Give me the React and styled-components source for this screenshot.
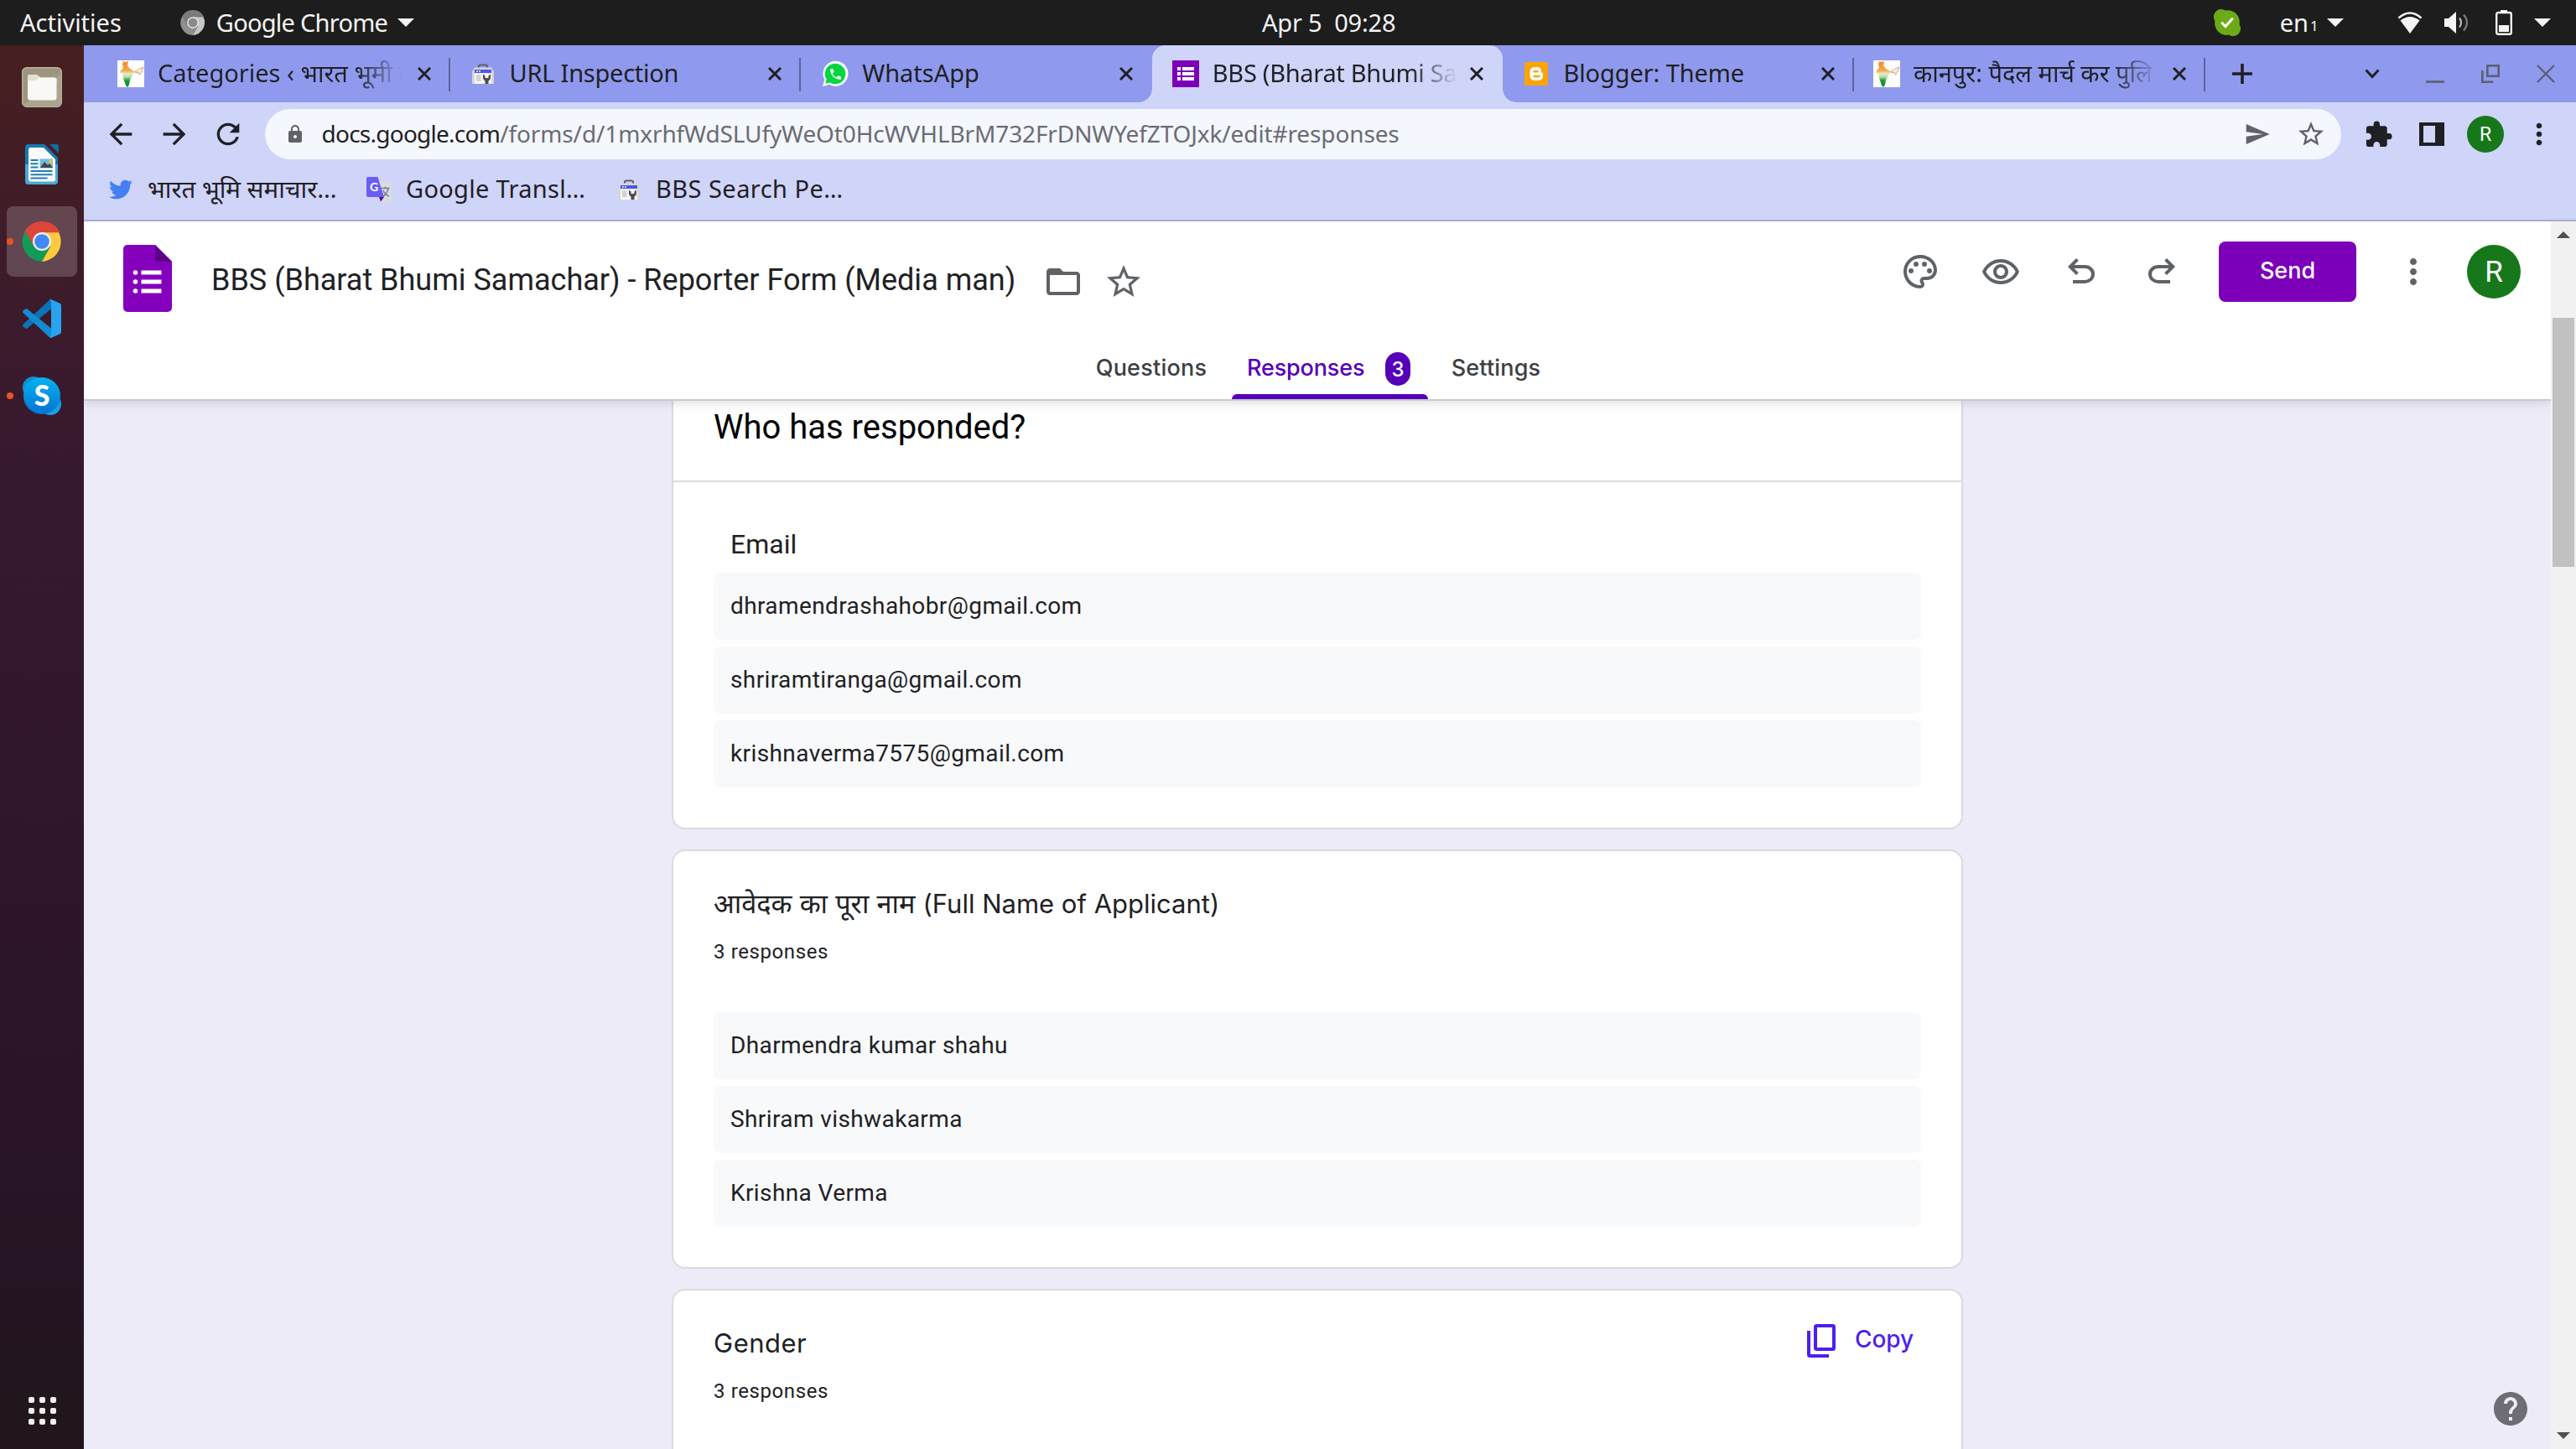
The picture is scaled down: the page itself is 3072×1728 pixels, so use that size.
import React from 'react';
import styled, { createGlobalStyle } from 'styled-components';
import {
  MdArrowBack, MdArrowForward, MdRefresh, MdLock, MdSend, MdStarBorder, MdExtension,
  MdMoreVert, MdFolderOpen, MdOutlinePalette, MdOutlineRemoveRedEye, MdHelp, MdPhone,
} from 'react-icons/md';
import { FaTwitter } from 'react-icons/fa';

const GlobalStyle = createGlobalStyle`
  *, *::before, *::after { box-sizing: border-box; }
  html, body { margin: 0; padding: 0; overflow: hidden; }
  svg { display: block; flex: none; }
`;

const uiFont = `'Noto Sans', 'Open Sans', sans-serif`;
const headingFont = `Inter, 'Noto Sans', sans-serif`;
const bodyFont = `Roboto, 'Noto Sans', sans-serif`;

/* ---------- desktop shell ---------- */

const Desktop = styled.div`
  width: 3072px;
  height: 1728px;
  display: grid;
  grid-template: 54px 1fr / 100px 1fr;
  overflow: hidden;
  font-family: ${uiFont};
  white-space: nowrap;
`;

const TopBar = styled.header`
  grid-column: 1 / -1;
  background: #1d1d1d;
  color: #f4f4f4;
  display: flex;
  align-items: center;
  padding: 0 30px 0 24px;
  font-size: 29px;
  line-height: 53px;
`;

const TopBarStart = styled.div`
  width: 1481px;
  display: flex;
  align-items: center;
`;

const TopBarEnd = styled.div`
  margin-left: auto;
  display: flex;
  align-items: center;
`;

const BarText = styled.span`
  height: 54px;
  white-space: pre;
  letter-spacing: ${(p) => p.$track || 0}px;
  margin-right: ${(p) => p.$after || 0}px;
`;

const BarSlot = styled.span`
  display: flex;
  margin-right: ${(p) => p.$after || 0}px;
`;

const KeyboardIndex = styled.span`
  font-size: 17px;
  line-height: 62px;
  height: 54px;
  width: 8px;
  margin-right: 12px;
`;

const Triangle = styled.span`
  width: 0;
  height: 0;
  border-style: solid;
  border-width: 10px 10px 0 10px;
  border-color: #f4f4f4 transparent transparent transparent;
`;

const Dock = styled.nav`
  background: linear-gradient(180deg, #471f20 0%, #3c1b2b 18%, #37192e 30%, #2c1527 68%, #251423 88%, #20161c 100%);
  display: flex;
  flex-direction: column;
  align-items: center;
  gap: 8px;
  padding: 8px 0 22px;
`;

const DockItem = styled.div`
  width: 84px;
  height: 84px;
  flex: none;
  border-radius: 8px;
  display: grid;
  place-items: center;
  position: relative;
  background: ${(p) => (p.$active ? 'rgba(255,255,255,0.19)' : 'transparent')};
`;

const RunningDot = styled.i`
  position: absolute;
  left: 0;
  top: 38px;
  width: 8px;
  height: 8px;
  border-radius: 50%;
  background: #e95420;
`;

const AppsButton = styled.div`
  margin-top: auto;
  width: 48px;
  height: 48px;
  display: grid;
  grid-template-columns: repeat(3, 7px);
  grid-auto-rows: 7px;
  gap: 6px;
  place-content: center;
`;

const AppsDot = styled.i`
  border-radius: 2px;
  background: #f1efec;
`;

/* ---------- browser chrome ---------- */

const Browser = styled.section`
  display: flex;
  flex-direction: column;
  min-width: 0;
  min-height: 0;
  background: #cfd4f9;
`;

const TabStrip = styled.div`
  height: 68px;
  flex: none;
  background: #8f9aee;
  display: flex;
  align-items: center;
  padding: 0 3px 0 18px;
`;

const BrowserTab = styled.div`
  position: relative;
  width: 418.6px;
  height: 68px;
  flex: none;
  display: flex;
  align-items: center;
  padding: 0 23px 0 ${(p) => p.$inset || 22}px;
  background: ${(p) => (p.$active ? '#cfd4f9' : 'transparent')};
  border-radius: 16px 16px 0 0;
  z-index: ${(p) => (p.$active ? 1 : 0)};

  &::before, &::after {
    content: '';
    display: ${(p) => (p.$active ? 'block' : 'none')};
    position: absolute;
    bottom: 0;
    width: 16px;
    height: 16px;
  }
  &::before {
    left: -16px;
    background: radial-gradient(circle at 0 0, transparent 15.5px, #cfd4f9 16px);
  }
  &::after {
    right: -16px;
    background: radial-gradient(circle at 100% 0, transparent 15.5px, #cfd4f9 16px);
  }
`;

const TabDivider = styled.i`
  position: absolute;
  right: 0;
  top: 15px;
  width: 2px;
  height: 40px;
  background: #5d6398;
`;

const Favicon = styled.span`
  width: 32px;
  height: 32px;
  flex: none;
  display: grid;
  place-items: center;
  margin-right: 16px;
`;

const TabTitle = styled.span`
  width: 292px;
  flex: none;
  overflow: hidden;
  font-size: 29px;
  line-height: 64px;
  height: 66px;
  color: #1f2024;
  letter-spacing: ${(p) => p.$track || 0}px;
  mask-image: ${(p) => (p.$fade ? 'linear-gradient(90deg, #000 236px, transparent 292px)' : 'none')};
`;

const TabClose = styled.span`
  margin-left: auto;
  display: flex;
`;

const StripButton = styled.span`
  width: ${(p) => p.$w || 66}px;
  height: 68px;
  margin-left: ${(p) => p.$push || 0};
  display: grid;
  place-items: center;
`;

const Toolbar = styled.div`
  height: 76px;
  flex: none;
  display: flex;
  align-items: center;
  padding: 0 12px;
  color: #1f2024;
`;

const ToolButton = styled.span`
  width: 64px;
  height: 60px;
  flex: none;
  display: grid;
  place-items: center;
`;

const AddressBar = styled.div`
  flex: 1;
  height: 60px;
  margin: 0 12px;
  border-radius: 30px;
  background: #f4f7fe;
  color: #5f6368;
  display: flex;
  align-items: center;
  padding: 0 4px 0 20px;
`;

const LockSlot = styled.span`
  width: 47.5px;
  padding-left: 4px;
`;

const Url = styled.span`
  flex: 1;
  font-size: 28px;
  line-height: 59px;
  height: 60px;
  color: #6a6c72;
  letter-spacing: -0.12px;
`;

const UrlHost = styled.span`
  color: #1f2024;
  letter-spacing: -0.75px;
`;

const Avatar = styled.span`
  width: ${(p) => p.$size}px;
  height: ${(p) => p.$size}px;
  border-radius: 50%;
  background: #17771b;
  color: #fff;
  display: grid;
  place-items: center;
  font-family: ${bodyFont};
  font-size: ${(p) => p.$font}px;
  line-height: 1;
`;

const BookmarkBar = styled.div`
  height: 66px;
  flex: none;
  display: flex;
  align-items: flex-start;
  gap: 35px;
  padding: 0 28px;
  border-bottom: 2px solid #a9accd;
`;

const Bookmark = styled.div`
  display: flex;
  align-items: center;
  height: 56px;
  color: #1f2024;
`;

const BookmarkLabel = styled.span`
  width: ${(p) => p.$w}px;
  font-size: ${(p) => p.$size || 29}px;
  line-height: 54px;
  height: 56px;
  letter-spacing: ${(p) => p.$track || 0}px;
`;

/* ---------- Forms page ---------- */

const Viewport = styled.div`
  flex: 1;
  min-height: 0;
  display: flex;
`;

const Page = styled.main`
  position: relative;
  flex: 1;
  min-width: 0;
  display: flex;
  flex-direction: column;
  background: #edebf8;
  overflow: hidden;
  font-family: ${bodyFont};
`;

const FormHeader = styled.header`
  position: relative;
  z-index: 1;
  height: 214px;
  flex: none;
  background: #fff;
  border-bottom: 2px solid #cacacf;
  box-shadow: 0 2px 12px rgba(0, 0, 0, 0.14);
`;

const TitleRow = styled.div`
  height: 136px;
  display: flex;
  align-items: center;
  padding: 0 36px 0 47px;
  color: #5f6368;
`;

const FormTitle = styled.h1`
  width: 958px;
  margin: 4px 34px 0 47px;
  font-size: 36px;
  font-weight: 400;
  line-height: 44px;
  color: #202124;
`;

const StarSlot = styled.span`
  margin: 8px 0 0 24px;
`;

const FolderSlot = styled.span`
  margin-top: 8px;
`;

const HeaderActions = styled.div`
  margin-left: auto;
  padding-bottom: 16px;
  display: flex;
  align-items: center;
`;

const HeaderIcon = styled.span`
  width: 96px;
  display: grid;
  place-items: center;
`;

const SendButton = styled.button`
  width: 164px;
  height: 72px;
  margin: 0 44px 0 20px;
  padding: 0 0 3px;
  border: 0;
  border-radius: 8px;
  background: #7b00b8;
  color: #fff;
  font: 500 27px ${headingFont};
`;

const MoreSlot = styled.span`
  margin-right: 40px;
`;

const FormTabs = styled.nav`
  height: 76px;
  display: flex;
  justify-content: center;
  gap: 12px;
`;

const FormTab = styled.a`
  position: relative;
  width: ${(p) => p.$w}px;
  display: flex;
  align-items: center;
  justify-content: ${(p) => (p.$active ? 'space-between' : 'center')};
  padding: ${(p) => (p.$active ? '0 21px 0 18px' : 0)};
  font: 500 27px ${headingFont};
  letter-spacing: ${(p) => p.$track || 0}px;
  color: ${(p) => (p.$active ? '#5600b8' : '#3c4043')};

  &::after {
    content: '';
    display: ${(p) => (p.$active ? 'block' : 'none')};
    position: absolute;
    left: 0;
    right: 0;
    bottom: 0;
    height: 6px;
    border-radius: 6px 6px 0 0;
    background: #5600b8;
  }
`;

const CountBadge = styled.span`
  width: 30px;
  height: 40px;
  margin-top: 4px;
  border-radius: 15px;
  background: #5600b8;
  color: #fff;
  display: grid;
  place-items: center;
  font-size: 24px;
  letter-spacing: 0;
`;

const CardList = styled.div`
  width: 1540px;
  margin: 0 auto;
  display: flex;
  flex-direction: column;
  gap: 24px;
`;

const Card = styled.section`
  flex: none;
  background: #fff;
  border: 2px solid #dadae0;
  border-top-width: ${(p) => (p.$cut ? 0 : 2)}px;
  border-radius: ${(p) => (p.$cut ? '0 0 16px 16px' : '16px')};
  padding-bottom: 48px;
`;

const CardBanner = styled.h2`
  margin: 0;
  height: 97px;
  padding-left: 48px;
  border-bottom: 2px solid #dadae0;
  font-size: 40px;
  font-weight: 400;
  line-height: 64px;
  color: #000;
`;

const CardBody = styled.div`
  padding: ${(p) => p.$top}px 48px 0;
`;

const ColumnLabel = styled.div`
  padding-left: 20px;
  margin-bottom: 14px;
  font-size: 32px;
  line-height: 40px;
  color: #202124;
`;

const QuestionRow = styled.div`
  display: flex;
  justify-content: space-between;
  height: 40px;
`;

const Question = styled.h3`
  margin: 0;
  font: 400 31px / 40px ${headingFont};
  letter-spacing: ${(p) => p.$track || 0}px;
  color: #202124;
`;

const QuestionHindi = styled.span`
  font-size: 32.5px;
  letter-spacing: 0;
`;

const ResponseCount = styled.div`
  margin-top: 21px;
  margin-bottom: 56px;
  font-size: 24px;
  line-height: 32px;
  letter-spacing: 0.6px;
  color: #202124;
`;

const Answers = styled.div`
  display: flex;
  flex-direction: column;
  gap: 8px;
`;

const Answer = styled.div`
  height: 80px;
  padding: 0 20px;
  border-radius: 8px;
  background: #f8f9fa;
  font-size: 28px;
  line-height: 79px;
  letter-spacing: 0.4px;
  color: #202124;
`;

const CopyButton = styled.div`
  display: flex;
  align-items: center;
  gap: 23px;
  height: 40px;
  padding-right: 9px;
  margin-top: -3px;
  color: #4f1fec;
  font: 500 28px / 37px ${headingFont};
  letter-spacing: -0.1px;
`;

const CopyLabel = styled.span`
  height: 40px;
`;

const HelpButton = styled.span`
  position: absolute;
  right: 24px;
  bottom: 24px;
  color: #6e6d73;
`;

const ScrollTrack = styled.div`
  width: 30px;
  flex: none;
  background: #f1f1f1;
  display: flex;
  flex-direction: column;
  align-items: center;
  padding: 12px 0;
`;

const ScrollArrow = styled.i`
  width: 0;
  height: 0;
  border-style: solid;
  border-color: transparent;
  border-width: ${(p) => (p.$down ? '8px 8px 0' : '0 8px 8px')};
  ${(p) => (p.$down ? 'margin-top: auto; border-top-color: #505050;' : 'border-bottom-color: #505050;')}
`;

const ScrollThumb = styled.div`
  width: 26px;
  height: 297px;
  margin-top: 95px;
  background: #c1c1c1;
`;

/* ---------- drawings ---------- */

const ChromeLogo = ({ size, red, yellow, green, ring, core }) => (
  <svg width={size} height={size} viewBox="0 0 48 48">
    <path d="M3.2 12A24 24 0 0 1 44.8 12V13.5H24L24 24L14 30Z" fill={red} />
    <path d="M44 13.2A24 24 0 0 1 23.5 48L34 30L24 24V13.2Z" fill={yellow} />
    <path d="M24 48A24 24 0 0 1 4 11.5L14 29.5L24 24L34 30Z" fill={green} />
    <circle cx="24" cy="24" r="11" fill={ring} />
    <circle cx="24" cy="24" r="8.8" fill={core} />
  </svg>
);

const FilesIcon = () => (
  <svg width="48" height="48" viewBox="0 0 48 48">
    <rect x="0.7" y="0.7" width="46.6" height="46.6" rx="5" fill="#9d957f" stroke="#b9b29f" strokeWidth="1.4" />
    <path d="M1.5 46L46 8v34a4 4 0 0 1-4 4z" fill="#aba48f" />
    <path d="M7 16v-5a2 2 0 0 1 2-2h9l4.5 3.5H39a2.5 2.5 0 0 1 2.5 2.5v5z" fill="#e4dfd3" />
    <rect x="7" y="12.5" width="34.5" height="27" rx="3" fill="#f9f8f6" />
    <path d="M7 18v-7a2 2 0 0 1 2-2h8l3.5 3.5L17 16H9a2 2 0 0 0-2 2z" fill="#e4dfd3" />
  </svg>
);

const WriterIcon = () => (
  <svg width="40" height="48" viewBox="0 0 40 48">
    <path d="M4 0h19l16 16v28a4 4 0 0 1-4 4H4a4 4 0 0 1-4-4V4a4 4 0 0 1 4-4z" fill="#1779b0" />
    <path d="M0 24h39v20a4 4 0 0 1-4 4H4a4 4 0 0 1-4-4z" fill="#49a9d8" />
    <path d="M6 4h16l14 14v24a2.5 2.5 0 0 1-2.5 2.5H6.5A2.5 2.5 0 0 1 4 42V6.5A2.5 2.5 0 0 1 6 4z" fill="#fbfbfb" />
    <path d="M29 0h9a2 2 0 0 1 2 2v9z" fill="#0f6ba3" />
    <path d="M6.5 19h9M6.5 23.3h9M6.5 27.6h9M6.5 32h26M6.5 36.3h26M6.5 40.6h20" stroke="#1f80b6" strokeWidth="2" />
    <rect x="17.5" y="17.5" width="15.5" height="11" fill="#6dbbe6" />
    <path d="M18 28l5-7 4 4 2-2 4 5z" fill="#474747" />
    <circle cx="30.5" cy="20.5" r="2.2" fill="#f0c63a" />
  </svg>
);

const CodeIcon = () => (
  <svg width="46" height="46" viewBox="0 0 46 46">
    <path d="M0.5 32.5Q-0.5 31 0.5 30L32 0.7L34.5 0.5V11L5.5 34.6Q4.5 35.5 3.5 34.7Z" fill="#0c73b8" />
    <path d="M0.5 13.5Q-0.5 15 0.5 16L32 45.3L34.5 45.5V35L5.5 11.4Q4.5 10.5 3.5 11.3Z" fill="#138bd0" />
    <path d="M34 0L44.5 4.8Q46 5.6 46 7.2V38.8Q46 40.4 44.5 41.2L34 46Q32.5 46 32 45.3Q34 45 34 42V4Q34 1 32 0.7Q32.5 0 34 0Z" fill="#27a3ef" />
  </svg>
);

const SkypeIcon = () => (
  <svg width="46" height="46" viewBox="0 0 46 46">
    <defs>
      <linearGradient id="skype" x1="0" y1="0" x2="0" y2="1">
        <stop offset="0" stopColor="#05b4ef" />
        <stop offset="1" stopColor="#0473d4" />
      </linearGradient>
    </defs>
    <circle cx="13" cy="13" r="13" fill="#0a94d6" />
    <circle cx="33" cy="33" r="13" fill="#1a9fe4" />
    <circle cx="23" cy="23" r="22" fill="url(#skype)" />
    <text x="23" y="35" textAnchor="middle" fontFamily="Lato, sans-serif" fontWeight="900" fontSize="34" fill="#fff">S</text>
  </svg>
);

const IndiaIcon = () => (
  <svg width="32" height="32" viewBox="0 0 32 32">
    <defs>
      <linearGradient id="tricolour" x1="0" y1="0" x2="0" y2="1">
        <stop offset="0" stopColor="#f28a1e" />
        <stop offset="0.36" stopColor="#f7a748" />
        <stop offset="0.48" stopColor="#e3efcb" />
        <stop offset="0.6" stopColor="#b5dfac" />
        <stop offset="0.74" stopColor="#1f9a35" />
        <stop offset="1" stopColor="#0c8a25" />
      </linearGradient>
    </defs>
    <rect width="32" height="32" fill="#fff" />
    <path d="M7 1l3 1 3-1-1 5 3 4 5 3 3-1 4-2 4-2-1 4-3 5-2 1-1-4-4 1-2 3-3 5-1 6-2 3-2-2-3-9-1-5-3-1 1-3 3-3-1-4z" fill="url(#tricolour)" />
    <path d="M22 13l4-3 5-2-2 5-2 4-2-3-3 1z" fill="#fbeee0" stroke="#c99a72" strokeWidth="0.8" />
  </svg>
);

const ConsoleIcon = () => (
  <svg width="26" height="24" viewBox="0 0 26 24">
    <path d="M8 6V3.500A2 2 0 0 1 10 1.500h6A2 2 0 0 1 18 3.500V6" fill="none" stroke="#606268" strokeWidth="2.2" />
    <path d="M3 4.500h20l3 5V24H0V9.500z" fill="#d6d6d6" />
    <rect x="3" y="7" width="20" height="4.200" fill="#4f55e6" />
    <circle cx="6" cy="9" r="0.9" fill="#fff" />
    <circle cx="9" cy="9" r="0.9" fill="#fff" />
    <rect x="3" y="11.2" width="20" height="12.8" fill="#f6f6f6" />
    <rect x="5" y="13" width="5.5" height="8" fill="#d2d2d2" />
    <path d="M13 12.500v4.500a4 4 0 0 0 2.500 3.500V24h4v-3.500a4 4 0 0 0 2.500-3.500v-4.500l-2.500 2v2.500h-4v-2.500z" fill="#4b4d52" />
  </svg>
);

const WhatsAppMark = styled.span`
  width: 32px;
  height: 32px;
  display: grid;
  place-items: center;

  & > svg { grid-area: 1 / 1; }
`;

const WhatsAppIcon = () => (
  <WhatsAppMark>
    <svg width="32" height="32" viewBox="0 0 32 32">
      <path d="M1 31l2.300-8A15 15 0 1 1 9 28.800z" fill="#fff" />
      <path d="M4.300 27.800l1.400-5.200A12.300 12.300 0 1 1 9.700 26.500z" fill="#04d63f" />
    </svg>
    <MdPhone size={17} color="#fff" />
  </WhatsAppMark>
);

const FormsTabIcon = () => (
  <svg width="32" height="32" viewBox="0 0 32 32">
    <rect width="32" height="32" fill="#7b00b8" />
    <path d="M6 8h4v4H6zM6 14h4v4H6zM6 20h4v4H6zM12 8h14v4H12zM12 14h14v4H12zM12 20h14v4H12z" fill="#fff" />
  </svg>
);

const BloggerIcon = () => (
  <svg width="28" height="28" viewBox="0 0 28 28">
    <rect width="28" height="28" rx="2.5" fill="#fba505" />
    <path d="M12 6h3.500a4.500 4.500 0 0 1 4.500 4.500v1.200a1.300 1.300 0 0 0 1.300 1.300H22v3.500a5 5 0 0 1-5 5.500h-5a5.500 5.500 0 0 1-5.500-5.500V11.500A5.500 5.500 0 0 1 12 6z" fill="#fff" />
    <path d="M11.500 11.300h4M11.500 17h6" stroke="#fba505" strokeWidth="2.4" strokeLinecap="round" />
  </svg>
);

const TranslateIcon = () => (
  <svg width="30" height="30" viewBox="0 0 30 30">
    <path d="M12 6h16a2 2 0 0 1 2 2v20a2 2 0 0 1-2 2H17z" fill="#dcdcdf" />
    <path d="M2 0h11.500l7.500 24H2a2 2 0 0 1-2-2V2a2 2 0 0 1 2-2z" fill="#6a5cf5" />
    <path d="M15 24h6l-4 5.500z" fill="#5b09b0" />
    <path d="M17.500 13.500h10M22.500 11.500v2M20 16c1.500 4 4 6 7 7M26 14c-1 4-3.500 7.500-6 9" fill="none" stroke="#6d8196" strokeWidth="1.5" />
    <text x="9.2" y="17" textAnchor="middle" fontFamily="Lato, sans-serif" fontWeight="700" fontSize="14" fill="#fff">G</text>
  </svg>
);

const CloseIcon = ({ size = 16, width = 3, color = '#1f2024' }) => (
  <svg width={size} height={size} viewBox={`0 0 ${size} ${size}`}>
    <path d={`M1 1L${size - 1} ${size - 1}M${size - 1} 1L1 ${size - 1}`} stroke={color} strokeWidth={width} />
  </svg>
);

const FormsLogo = () => (
  <svg width="58" height="80" viewBox="0 0 58 80">
    <path d="M5 0h33l20 20v55a5 5 0 0 1-5 5H5a5 5 0 0 1-5-5V5a5 5 0 0 1 5-5z" fill="#8500bd" />
    <path d="M38 0l20 20H38z" fill="#5f0088" />
    <circle cx="14.5" cy="33" r="2.8" fill="#fff" />
    <circle cx="14.5" cy="44" r="2.8" fill="#fff" />
    <circle cx="14.5" cy="55" r="2.8" fill="#fff" />
    <path d="M21.500 33h24M21.500 44h24M21.500 55h24" stroke="#fff" strokeWidth="5.2" />
  </svg>
);

const UndoIcon = ({ redo }) => (
  <svg width="48" height="48" viewBox="0 -960 960 960" fill="currentColor" transform={redo ? 'scale(-1 1)' : undefined}>
    <path d="M280-200v-80h284q63 0 109.500-40T720-420q0-60-46.500-100T564-560H312l104 104-56 56-200-200 200-200 56 56-104 104h252q97 0 169.500 63T800-420q0 94-72.500 157T564-200H280Z" />
  </svg>
);

/* ---------- content ---------- */

const tabs = [
  { title: 'Categories ‹ भारत भूमी स', icon: <IndiaIcon />, divider: true, fade: true },
  { title: 'URL Inspection', icon: <ConsoleIcon />, divider: true, track: -0.25, inset: 23 },
  { title: 'WhatsApp', icon: <WhatsAppIcon />, inset: 25 },
  { title: 'BBS (Bharat Bhumi Sa', icon: <FormsTabIcon />, active: true, fade: true, track: -0.3, inset: 24 },
  { title: 'Blogger: Theme', icon: <BloggerIcon />, divider: true, track: -0.1, inset: 24 },
  { title: 'कानपुर: पैदल मार्च कर पुलि', icon: <IndiaIcon />, divider: true, fade: true, inset: 23 },
];

const emails = ['dhramendrashahobr@gmail.com', 'shriramtiranga@gmail.com', 'krishnaverma7575@gmail.com'];
const names = ['Dharmendra kumar shahu', 'Shriram vishwakarma', 'Krishna Verma'];

export default function App() {
  return (
    <>
      <GlobalStyle />
      <Desktop>
        <TopBar>
          <TopBarStart>
            <BarText $after={70}>Activities</BarText>
            <BarSlot $after={13}>
              <ChromeLogo size={30} red="#7b7b7b" yellow="#c6c6c6" green="#8f8f8f" ring="#f0f0f0" core="#8a8a8a" />
            </BarSlot>
            <BarText $track={-0.75} $after={12}>Google Chrome</BarText>
            <Triangle />
          </TopBarStart>
          <BarText $track={-0.2}>{'Apr 5  09:28'}</BarText>
          <TopBarEnd>
            <BarSlot $after={47}>
              <svg width="32" height="32" viewBox="0 0 32 32">
                <path d="M9 0a9 9 0 0 1 5 1.500A14 14 0 0 1 30.500 18 9 9 0 0 1 18 30.500 14 14 0 0 1 1.500 14 9 9 0 0 1 9 0z" fill="#6bab17" />
                <path d="M10 16.500l4 4 8-9" fill="none" stroke="#fff" strokeWidth="3" strokeLinecap="round" />
              </svg>
            </BarSlot>
            <BarText $after={2}>en</BarText>
            <KeyboardIndex>1</KeyboardIndex>
            <BarSlot $after={64}><Triangle /></BarSlot>
            <BarSlot $after={26}>
              <svg width="30" height="26" viewBox="0 0 30 26">
                <path d="M1.500 7.500Q15-4.500 28.500 7.500" fill="none" stroke="#f4f4f4" strokeWidth="2.4" />
                <path d="M15 26L3.500 10.500Q15 1.500 26.500 10.500z" fill="#f4f4f4" />
              </svg>
            </BarSlot>
            <BarSlot $after={32}>
              <svg width="29" height="26" viewBox="0 0 29 26">
                <path d="M0 8h5l9-8v26l-9-8H0z" fill="#f4f4f4" />
                <path d="M18 7.500q4 5.500 0 11" fill="none" stroke="#b9b9b9" strokeWidth="2.2" />
                <path d="M23 3.500q8 9.500 0 19" fill="none" stroke="#777" strokeWidth="2.2" />
              </svg>
            </BarSlot>
            <BarSlot $after={26}>
              <svg width="20" height="30" viewBox="0 0 20 30">
                <rect x="6" y="0" width="8" height="3" fill="#f4f4f4" />
                <rect x="1.2" y="3" width="17.6" height="25.8" rx="2" fill="none" stroke="#f4f4f4" strokeWidth="2.4" />
                <rect x="4" y="18" width="12" height="8" fill="#f4f4f4" />
              </svg>
            </BarSlot>
            <Triangle />
          </TopBarEnd>
        </TopBar>

        <Dock>
          <DockItem><FilesIcon /></DockItem>
          <DockItem><WriterIcon /></DockItem>
          <DockItem $active>
            <RunningDot />
            <ChromeLogo size={48} red="#dd4639" yellow="#fecb3e" green="#129b57" ring="#f1f1f1" core="#4486f5" />
          </DockItem>
          <DockItem><CodeIcon /></DockItem>
          <DockItem><RunningDot /><SkypeIcon /></DockItem>
          <AppsButton>
            {Array.from({ length: 9 }, (_, i) => <AppsDot key={i} />)}
          </AppsButton>
        </Dock>

        <Browser>
          <TabStrip>
            {tabs.map((t) => (
              <BrowserTab key={t.title} $active={t.active} $inset={t.inset}>
                <Favicon>{t.icon}</Favicon>
                <TabTitle $fade={t.fade} $track={t.track}>{t.title}</TabTitle>
                <TabClose><CloseIcon /></TabClose>
                {t.divider && <TabDivider />}
              </BrowserTab>
            ))}
            <StripButton $w={48} $push="20px">
              <svg width="24" height="24" viewBox="0 0 24 24"><path d="M12 0v24M0 12h24" stroke="#1f2024" strokeWidth="3.6" /></svg>
            </StripButton>
            <StripButton $w={84} $push="auto">
              <svg width="18" height="12" viewBox="0 0 18 12"><path d="M1.500 1.500L9 9.500L16.500 1.500" fill="none" stroke="#1f2024" strokeWidth="3" /></svg>
            </StripButton>
            <StripButton>
              <svg width="22" height="22" viewBox="0 0 22 22"><path d="M0 20.500h22" stroke="#5c5f73" strokeWidth="2.6" /></svg>
            </StripButton>
            <StripButton>
              <svg width="22" height="22" viewBox="0 0 22 22" fill="none" stroke="#5c5f73" strokeWidth="2.6">
                <rect x="7.3" y="1.3" width="13.4" height="12.4" />
                <path d="M1.300 7v13.700h13" />
              </svg>
            </StripButton>
            <StripButton><CloseIcon size={22} width={2.4} color="#5c5f73" /></StripButton>
          </TabStrip>

          <Toolbar>
            <ToolButton><MdArrowBack size={40} /></ToolButton>
            <ToolButton><MdArrowForward size={40} /></ToolButton>
            <ToolButton><MdRefresh size={40} /></ToolButton>
            <AddressBar>
              <LockSlot><MdLock size={24} /></LockSlot>
              <Url><UrlHost>docs.google.com</UrlHost>/forms/d/1mxrhfWdSLUfyWeOt0HcWVHLBrM732FrDNWYefZTOJxk/edit#responses</Url>
              <ToolButton><MdSend size={32} /></ToolButton>
              <ToolButton><MdStarBorder size={36} /></ToolButton>
            </AddressBar>
            <ToolButton><MdExtension size={35} /></ToolButton>
            <ToolButton>
              <svg width="30" height="28" viewBox="0 0 30 28"><path fillRule="evenodd" d="M0 0h30v28H0zM5 4v20h14V4z" fill="#1f2024" /></svg>
            </ToolButton>
            <ToolButton><Avatar $size={44} $font={23}>R</Avatar></ToolButton>
            <ToolButton><MdMoreVert size={40} /></ToolButton>
          </Toolbar>

          <BookmarkBar>
            <Bookmark>
              <Favicon><FaTwitter size={28} color="#457ff5" /></Favicon>
              <BookmarkLabel $w={225} $size={29.5}>भारत भूमि समाचार…</BookmarkLabel>
            </Bookmark>
            <Bookmark>
              <Favicon><TranslateIcon /></Favicon>
              <BookmarkLabel $w={215} $track={0.3}>Google Transl…</BookmarkLabel>
            </Bookmark>
            <Bookmark>
              <Favicon><ConsoleIcon /></Favicon>
              <BookmarkLabel $w={225} $track={0.45}>BBS Search Pe…</BookmarkLabel>
            </Bookmark>
          </BookmarkBar>

          <Viewport>
            <Page>
              <FormHeader>
                <TitleRow>
                  <FormsLogo />
                  <FormTitle>BBS (Bharat Bhumi Samachar) - Reporter Form (Media man)</FormTitle>
                  <FolderSlot><MdFolderOpen size={48} /></FolderSlot>
                  <StarSlot><MdStarBorder size={48} /></StarSlot>
                  <HeaderActions>
                    <HeaderIcon><MdOutlinePalette size={48} /></HeaderIcon>
                    <HeaderIcon><MdOutlineRemoveRedEye size={48} /></HeaderIcon>
                    <HeaderIcon><UndoIcon /></HeaderIcon>
                    <HeaderIcon><UndoIcon redo /></HeaderIcon>
                    <SendButton>Send</SendButton>
                    <MoreSlot><MdMoreVert size={48} /></MoreSlot>
                    <Avatar $size={64} $font={35}>R</Avatar>
                  </HeaderActions>
                </TitleRow>
                <FormTabs>
                  <FormTab $w={168} $track={0.25}>Questions</FormTab>
                  <FormTab $w={234} $active $track={-0.15}>Responses<CountBadge>3</CountBadge></FormTab>
                  <FormTab $w={138} $track={0.15}>Settings</FormTab>
                </FormTabs>
              </FormHeader>

              <CardList>
                <Card $cut>
                  <CardBanner>Who has responded?</CardBanner>
                  <CardBody $top={54}>
                    <ColumnLabel>Email</ColumnLabel>
                    <Answers>{emails.map((e) => <Answer key={e}>{e}</Answer>)}</Answers>
                  </CardBody>
                </Card>
                <Card>
                  <CardBody $top={43}>
                    <QuestionRow>
                      <Question><QuestionHindi>आवेदक का पूरा नाम </QuestionHindi>(Full Name of Applicant)</Question>
                    </QuestionRow>
                    <ResponseCount>3 responses</ResponseCount>
                    <Answers>{names.map((n) => <Answer key={n}>{n}</Answer>)}</Answers>
                  </CardBody>
                </Card>
                <Card>
                  <CardBody $top={43}>
                    <QuestionRow>
                      <Question $track={0.5}>Gender</Question>
                      <CopyButton>
                        <svg width="34" height="40" viewBox="0 0 34 40" fill="none" stroke="currentColor" strokeWidth="4">
                          <rect x="10" y="2" width="22" height="28" rx="1.5" />
                          <path d="M2 8v28.500a1.500 1.500 0 0 0 1.500 1.500H26" />
                        </svg>
                        <CopyLabel>Copy</CopyLabel>
                      </CopyButton>
                    </QuestionRow>
                    <ResponseCount>3 responses</ResponseCount>
                  </CardBody>
                </Card>
              </CardList>
              <HelpButton><MdHelp size={48} /></HelpButton>
            </Page>
            <ScrollTrack>
              <ScrollArrow />
              <ScrollThumb />
              <ScrollArrow $down />
            </ScrollTrack>
          </Viewport>
        </Browser>
      </Desktop>
    </>
  );
}
